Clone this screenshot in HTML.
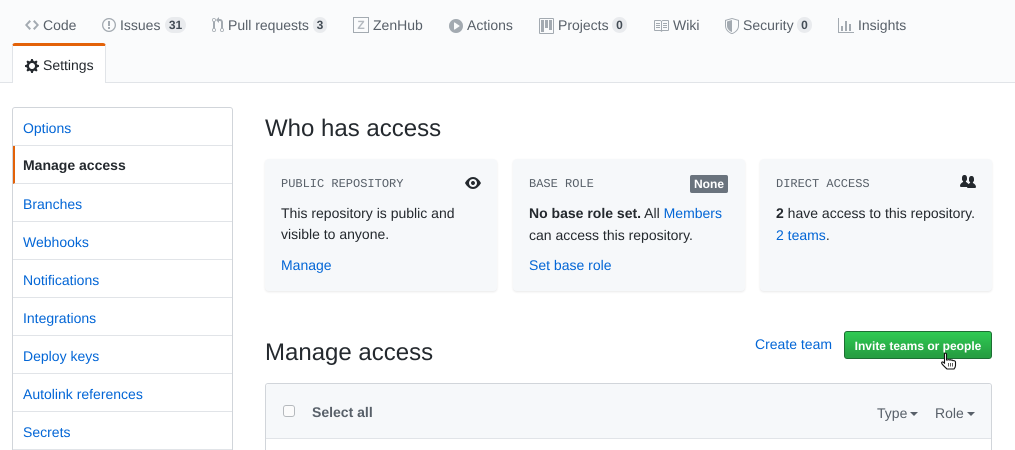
<!DOCTYPE html>
<html lang="en"><head><meta charset="utf-8"><title>Manage access</title>
<style>
*{box-sizing:border-box}
html,body{margin:0;padding:0;width:1015px;height:450px;overflow:hidden;background:#fff}
body{position:relative;font:14px/20px "Liberation Sans",sans-serif;color:#24292e;text-rendering:geometricPrecision}
a{color:#0366d6;text-decoration:none}
.a{position:absolute;white-space:nowrap}
.hd{position:absolute;left:0;top:0;width:1015px;height:83px;background:#fafbfc;border-bottom:1px solid #e1e4e8}
.t{position:absolute;top:15px;color:#586069;white-space:nowrap}
.c{position:absolute;top:17px;height:16px;border-radius:8px;background:#e9ebee;color:#444d56;font-size:12px;font-weight:bold;line-height:16px;text-align:center}
.i{position:absolute;fill:#a3aab1;fill-rule:evenodd}
.tab{position:absolute;left:12px;top:43px;width:94px;height:40px;background:#fff;border:1px solid #e1e4e8;border-top:3px solid #e36209;border-bottom:0;border-radius:3px 3px 0 0}
.side{position:absolute;left:12px;top:107px;width:221px;height:360px;border:1px solid #d1d5da;border-radius:3px;background:#fff}
.side a{position:absolute;left:0;width:219px;height:38px;padding:10px 10px 0;line-height:20px;border-bottom:1px solid #e1e4e8}
.side a.on{font-weight:bold;color:#24292e;border-left:2px solid #e36209;padding-left:8px;padding-top:9px}
.card{position:absolute;top:159px;height:132px;background:#f6f8fa;border-radius:4px;box-shadow:0 1px 2px rgba(27,31,35,.1)}
.m{position:absolute;top:15px;left:16px;font:12px/20px "Liberation Mono",monospace;color:#586069;white-space:nowrap}
.p{position:absolute;left:16px;white-space:nowrap;line-height:21px}
h2{position:absolute;margin:0;left:265px;font-size:24px;font-weight:normal;line-height:30px;white-space:nowrap}
</style></head><body>
<div class="hd"></div>
<svg class="i" style="left:25px;top:17px" width="14" height="16" viewBox="0 0 14 16"><path d="M9.5 3L8 4.5 11.5 8 8 11.5 9.5 13 14 8 9.5 3zm-5 0L0 8l4.500 5L6 11.500 2.500 8 6 4.500 4.500 3z"/></svg>
<div class="t" style="left:43px">Code</div>
<svg class="i" style="left:102px;top:17px" width="14" height="16" viewBox="0 0 14 16"><path d="M7 2.300c3.140 0 5.700 2.560 5.700 5.700s-2.560 5.700-5.700 5.700A5.710 5.710 0 011.300 8c0-3.140 2.560-5.700 5.700-5.700zM7 1C3.140 1 0 4.140 0 8s3.140 7 7 7 7-3.140 7-7-3.140-7-7-7zm1 3H6v5h2V4zm0 6H6v2h2v-2z"/></svg>
<div class="t" style="left:120px">Issues</div><div class="c" style="left:165px;width:21px">31</div>
<svg class="i" style="left:212px;top:17px" width="12" height="16" viewBox="0 0 12 16"><path d="M11 11.280V5c-.03-.78-.34-1.470-.94-2.060C9.460 2.350 8.780 2.030 8 2H7V0L4 3l3 3V4h1c.27.02.48.11.69.31.21.2.3.42.31.69v6.280A1.993 1.993 0 0010 15a1.993 1.993 0 001-3.720zm-1 2.920c-.66 0-1.200-.55-1.200-1.200 0-.65.55-1.200 1.200-1.200.65 0 1.200.55 1.200 1.200 0 .65-.55 1.200-1.200 1.200zM4 3c0-1.110-.89-2-2-2a1.993 1.993 0 00-1 3.720v6.560A1.993 1.993 0 002 15a1.993 1.993 0 001-3.720V4.720c.59-.34 1-.98 1-1.720zm-.8 10c0 .66-.55 1.200-1.200 1.200-.65 0-1.200-.55-1.200-1.200 0-.65.55-1.200 1.200-1.200.65 0 1.200.55 1.200 1.200zM2 4.200C1.340 4.200.8 3.650.8 3c0-.65.55-1.200 1.200-1.200.65 0 1.200.55 1.200 1.200 0 .65-.55 1.200-1.200 1.200z"/></svg>
<div class="t" style="left:228px">Pull requests</div><div class="c" style="left:313px;width:14px">3</div>
<div class="a" style="left:353px;top:17px;width:16px;height:16px;border:1px solid #a3aab1;color:#b4b9bf;font-size:12px;font-weight:bold;line-height:14px;text-align:center">Z</div>
<div class="t" style="left:373px">ZenHub</div>
<svg class="i" style="left:449px;top:18px" width="14" height="16" viewBox="0 0 14 16"><path d="M14 8A7 7 0 110 8a7 7 0 0114 0zm-8.223 3.482l4.599-3.066a.5.5 0 000-.832L5.777 4.518A.5.5 0 005 4.934v6.132a.5.5 0 00.777.416z"/></svg>
<div class="t" style="left:467px">Actions</div>
<svg class="i" style="left:539px;top:18px" width="15" height="16" viewBox="0 0 15 16"><path d="M10 12h3V2h-3v10zm-4-2h3V2H6v8zm-4 4h3V2H2v12zm-1 1h13V1H1v14zM14 0H1a1 1 0 00-1 1v14a1 1 0 001 1h13a1 1 0 001-1V1a1 1 0 00-1-1z"/></svg>
<div class="t" style="left:558px">Projects</div><div class="c" style="left:612px;width:15px">0</div>
<svg class="i" style="left:653px;top:18px" width="16" height="16" viewBox="0 0 16 16"><path d="M3 5h4v1H3V5zm0 3h4V7H3v1zm0 2h4V9H3v1zm11-5h-4v1h4V5zm0 2h-4v1h4V7zm0 2h-4v1h4V9zm2-6v9c0 .55-.45 1-1 1H9.500l-1 1-1-1H2c-.55 0-1-.45-1-1V3c0-.55.45-1 1-1h5.500l1 1 1-1H15c.55 0 1 .45 1 1zm-8 .5L7.500 3H2v9h6V3.500zm7-.5H9.500l-.5.5V12h6V3z"/></svg>
<div class="t" style="left:673px">Wiki</div>
<svg class="i" style="left:725px;top:18px" width="14" height="16" viewBox="0 0 14 16"><path d="M0 2l7-2 7 2v6.020C14 12.690 8.690 16 7 16c-1.690 0-7-3.310-7-7.980V2zm1 .75L7 1l6 1.750v5.268C13 12.104 8.449 15 7 15c-1.449 0-6-2.896-6-6.982V2.750zm1 .75L7 2v12c-1.207 0-5-2.482-5-5.985V3.500z"/></svg>
<div class="t" style="left:743px">Security</div><div class="c" style="left:797px;width:15px">0</div>
<svg class="i" style="left:838px;top:18px" width="16" height="16" viewBox="0 0 16 16"><path d="M16 14v1H0V0h1v14h15zM5 13H3V8h2v5zm4 0H7V3h2v10zm4 0h-2V6h2v7z"/></svg>
<div class="t" style="left:858px">Insights</div>
<div class="tab"></div>
<svg class="a" style="left:25px;top:58px;fill:#24292e" width="14" height="16" viewBox="0 0 14 16"><path d="M14 8.770v-1.600l-1.940-.64-.45-1.090.88-1.840-1.130-1.130-1.810.91-1.090-.45-.69-1.920h-1.600l-.63 1.940-1.110.45-1.840-.88-1.130 1.130.91 1.810-.45 1.090L0 7.230v1.590l1.940.64.45 1.090-.88 1.840 1.130 1.130 1.810-.91 1.090.45.69 1.920h1.590l.63-1.940 1.110-.45 1.840.88 1.130-1.130-.92-1.810.47-1.090L14 8.750v.02zM7 11c-1.660 0-3-1.340-3-3s1.340-3 3-3 3 1.340 3 3-1.340 3-3 3z"/></svg>
<div class="a" style="left:43px;top:55px">Settings</div>

<div class="side">
<a style="top:0;height:38px" href="#">Options</a>
<a class="on" style="top:38px" href="#">Manage access</a>
<a style="top:76px" href="#">Branches</a>
<a style="top:114px" href="#">Webhooks</a>
<a style="top:152px" href="#">Notifications</a>
<a style="top:190px" href="#">Integrations</a>
<a style="top:228px" href="#">Deploy keys</a>
<a style="top:266px" href="#">Autolink references</a>
<a style="top:304px" href="#">Secrets</a>
</div>

<h2 style="top:114px">Who has access</h2>

<div class="card" style="left:265px;width:232px">
<div class="m">PUBLIC REPOSITORY</div>
<svg class="a" style="left:200px;top:16px;fill:#24292e" width="16" height="16" viewBox="0 0 16 16"><path d="M8.060 2C3 2 0 8 0 8s3 6 8.060 6C13 14 16 8 16 8s-3-6-7.940-6zM8 12c-2.200 0-4-1.780-4-4 0-2.200 1.800-4 4-4 2.220 0 4 1.800 4 4 0 2.220-1.780 4-4 4zm2-4c0 1.110-.89 2-2 2-1.110 0-2-.89-2-2 0-1.110.89-2 2-2 1.110 0 2 .89 2 2z"/></svg>
<div class="p" style="top:44px">This repository is public and<br>visible to anyone.</div>
<a class="p" style="top:96px" href="#">Manage</a>
</div>

<div class="card" style="left:512.500px;width:232px">
<div class="m" style="left:16.500px">BASE ROLE</div>
<div class="a" style="left:177.500px;top:16px;width:38px;height:18px;background:#6a737d;border-radius:2px;color:#fff;font-size:12px;font-weight:bold;line-height:19px;text-align:center">None</div>
<div class="p" style="top:44px;left:16.500px"><b>No base role set.</b> All <a href="#">Members</a><br><span style="position:relative;top:1px">can access this repository.</span></div>
<a class="p" style="top:96px;left:16.500px" href="#">Set base role</a>
</div>

<div class="card" style="left:760px;width:232px">
<div class="m">DIRECT ACCESS</div>
<svg class="a" style="left:200px;top:15px;fill:#24292e" width="16" height="16" viewBox="0 0 16 16"><path d="M16 12.999c0 .439-.45 1-1 1H7.995c-.539 0-.994-.447-.995-.999H1c-.54 0-1-.561-1-1 0-2.634 3-4 3-4s.229-.409 0-1c-.841-.621-1.058-.59-1-3 .058-2.419 1.367-3 2.500-3s2.442.58 2.500 3c.058 2.410-.159 2.379-1 3-.229.59 0 1 0 1s1.549.711 2.420 2.088C9.196 9.369 10 8.999 10 8.999s.229-.409 0-1c-.841-.62-1.058-.59-1-3 .058-2.419 1.367-3 2.500-3s2.437.581 2.495 3c.059 2.410-.158 2.380-1 3-.229.59 0 1 0 1s3.005 1.366 3.005 4z"/></svg>
<div class="p" style="top:44px"><b>2</b> have access to this repository.<br><span style="position:relative;top:1px"><a href="#">2 teams</a>.</span></div>
</div>

<h2 style="top:338px">Manage access</h2>
<a class="a" style="left:755px;top:334px" href="#">Create team</a>
<div class="a" style="left:844px;top:331px;width:148px;height:28px;background:linear-gradient(#2fcb53,#269f42 90%);border:1px solid #1d6e33;border-radius:3px;color:#fff;font-size:12px;font-weight:bold;line-height:28px;text-align:center">Invite teams or people</div>
<svg class="a" style="left:940px;top:352px" width="20" height="20" viewBox="0 0 20 20"><path d="M4.500 1.500c.8-.7 2-.2 2 1V8h1c.4-.5 1.400-.5 1.800 0 .5-.4 1.400-.4 1.800.2.600-.3 1.400-.1 1.700.4.6-.2 2.700.2 2.700 1.400v3.500c0 1.500-.8 2.700-1.500 3.500H7C6 16 2.500 13 1.800 11.500c-.6-1 .4-2 1.500-1.300l1.200.9z" fill="#fff" stroke="#111" stroke-width="1.100"/><path d="M8.500 11v3.500M10.500 11v3.500M12.500 11v3.500" stroke="#333" stroke-width=".8"/></svg>

<div class="a" style="left:265px;top:383px;width:727px;height:80px;border:1px solid #d1d5da;border-radius:3px 3px 0 0;background:#fff"></div>
<div class="a" style="left:266px;top:384px;width:725px;height:55px;background:#f6f8fa;border-bottom:1px solid #e1e4e8;border-radius:3px 3px 0 0"></div>
<div class="a" style="left:283px;top:405px;width:12px;height:12px;background:#fbfbfb;border:1px solid #b5b9bd;border-radius:3px"></div>
<div class="a" style="left:312px;top:402px;font-weight:bold;color:#586069">Select all</div>
<div class="a" style="left:877px;top:403px;color:#586069">Type</div>
<div class="a" style="left:910px;top:412px;width:0;height:0;border:4px solid transparent;border-top-color:#586069;border-bottom:0"></div>
<div class="a" style="left:935px;top:403px;color:#586069">Role</div>
<div class="a" style="left:967px;top:412px;width:0;height:0;border:4px solid transparent;border-top-color:#586069;border-bottom:0"></div>
</body></html>
